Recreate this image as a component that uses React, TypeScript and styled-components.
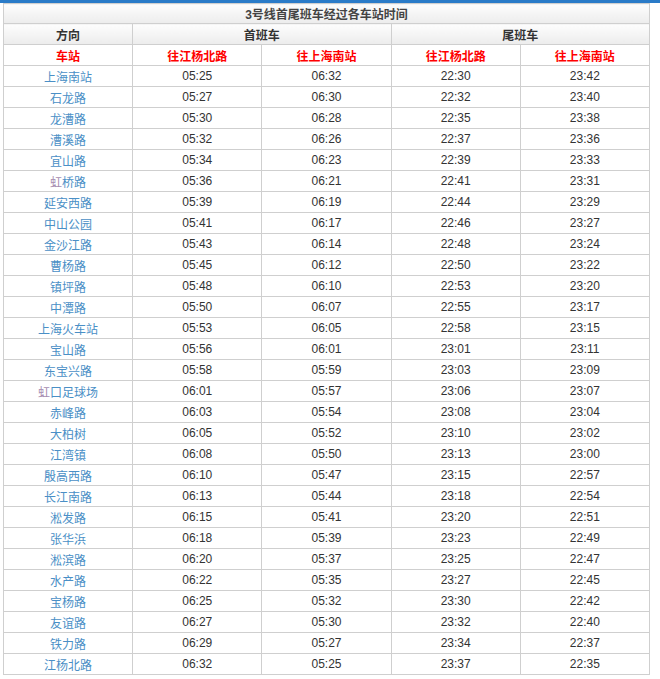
import React from "react";
import styled, { createGlobalStyle } from "styled-components";

const rows: [string, string, string, string, string][] = [
  ["上海南站", "05:25", "06:32", "22:30", "23:42"],
  ["石龙路", "05:27", "06:30", "22:32", "23:40"],
  ["龙漕路", "05:30", "06:28", "22:35", "23:38"],
  ["漕溪路", "05:32", "06:26", "22:37", "23:36"],
  ["宜山路", "05:34", "06:23", "22:39", "23:33"],
  ["虹桥路", "05:36", "06:21", "22:41", "23:31"],
  ["延安西路", "05:39", "06:19", "22:44", "23:29"],
  ["中山公园", "05:41", "06:17", "22:46", "23:27"],
  ["金沙江路", "05:43", "06:14", "22:48", "23:24"],
  ["曹杨路", "05:45", "06:12", "22:50", "23:22"],
  ["镇坪路", "05:48", "06:10", "22:53", "23:20"],
  ["中潭路", "05:50", "06:07", "22:55", "23:17"],
  ["上海火车站", "05:53", "06:05", "22:58", "23:15"],
  ["宝山路", "05:56", "06:01", "23:01", "23:11"],
  ["东宝兴路", "05:58", "05:59", "23:03", "23:09"],
  ["虹口足球场", "06:01", "05:57", "23:06", "23:07"],
  ["赤峰路", "06:03", "05:54", "23:08", "23:04"],
  ["大柏树", "06:05", "05:52", "23:10", "23:02"],
  ["江湾镇", "06:08", "05:50", "23:13", "23:00"],
  ["殷高西路", "06:10", "05:47", "23:15", "22:57"],
  ["长江南路", "06:13", "05:44", "23:18", "22:54"],
  ["淞发路", "06:15", "05:41", "23:20", "22:51"],
  ["张华浜", "06:18", "05:39", "23:23", "22:49"],
  ["淞滨路", "06:20", "05:37", "23:25", "22:47"],
  ["水产路", "06:22", "05:35", "23:27", "22:45"],
  ["宝杨路", "06:25", "05:32", "23:30", "22:42"],
  ["友谊路", "06:27", "05:30", "23:32", "22:40"],
  ["铁力路", "06:29", "05:27", "23:34", "22:37"],
  ["江杨北路", "06:32", "05:25", "23:37", "22:35"],
];

const Global = createGlobalStyle`
  body {
    margin: 0;
    background: #fff;
    font-family: Arial, "Liberation Sans", "Noto Sans CJK SC", sans-serif;
  }
`;

const Page = styled.div`
  border-top: 3px solid #2a7bc8;
  padding: 0 10px 0 3px;
`;

const Table = styled.table`
  width: 647px;
  border-collapse: collapse;
  font-size: 12px;
  table-layout: fixed;
`;

const Cell = styled.td<{ $head?: boolean; $red?: boolean; $station?: boolean }>`
  border: 1px solid #cfcfcf;
  height: 20px;
  padding: 0;
  text-align: center;
  color: ${(p) => (p.$red ? "#f00" : p.$station ? "#4a8fc6" : "#333")};
  font-weight: ${(p) => (p.$head || p.$red ? "bold" : "normal")};
  background: ${(p) => (p.$head ? "linear-gradient(#fdfdfd, #ececec)" : "#fff")};
`;

const Title = styled(Cell)`
  height: 19px;
  color: #444;
`;

const Rain = styled.span`
  color: #a68db0;
`;

const station = (s: string) =>
  s.startsWith("虹") ? (
    <>
      <Rain>虹</Rain>
      {s.slice(1)}
    </>
  ) : (
    s
  );

export default function App() {
  return (
    <Page>
      <Global />
      <Table>
        <tbody>
          <tr>
            <Title as="td" colSpan={5} $head>
              3号线首尾班车经过各车站时间
            </Title>
          </tr>
          <tr>
            <Cell $head>方向</Cell>
            <Cell $head colSpan={2}>首班车</Cell>
            <Cell $head colSpan={2}>尾班车</Cell>
          </tr>
          <tr>
            <Cell $red>车站</Cell>
            <Cell $red>往江杨北路</Cell>
            <Cell $red>往上海南站</Cell>
            <Cell $red>往江杨北路</Cell>
            <Cell $red>往上海南站</Cell>
          </tr>
          {rows.map((r) => (
            <tr key={r[0]}>
              <Cell $station>{station(r[0])}</Cell>
              <Cell>{r[1]}</Cell>
              <Cell>{r[2]}</Cell>
              <Cell>{r[3]}</Cell>
              <Cell>{r[4]}</Cell>
            </tr>
          ))}
        </tbody>
      </Table>
    </Page>
  );
}
